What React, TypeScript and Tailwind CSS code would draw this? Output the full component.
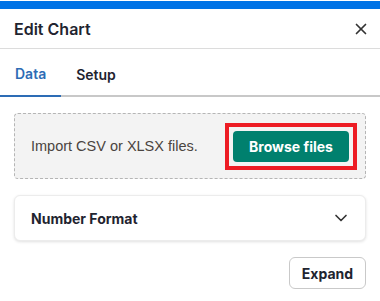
import { ChevronDown, X } from "lucide-react";

export default function App() {
    return (
        <div className="w-[380px] h-[301px] bg-white overflow-hidden font-['Inter',sans-serif] text-[#1f2430]">
            <div className="pt-px">
                <div className="h-2 bg-[#0073e6]" />
            </div>

            <div className="flex h-10 items-center justify-between border-b border-[#dcdcdc] pl-[14px] pr-[10px]">
                <div className="text-[16px] font-semibold">Edit Chart</div>
                <X className="h-[18px] w-[18px] text-[#333]" strokeWidth={2.25} />
            </div>

            <div className="flex h-12 border-b-2 border-[#c8c8c8]">
                <div className="-mb-[2px] flex items-center border-b-2 border-[#2d6cb5] px-[15px] pt-[2px] text-[14px] font-semibold text-[#2d6cb5]">
                    Data
                </div>
                <div className="-mb-[2px] flex items-center px-[15px] pt-[2px] text-[14px] font-semibold">
                    Setup
                </div>
            </div>

            <div className="flex flex-col gap-4 px-[14px] pt-4">
                <div className="flex h-[66px] items-center justify-between rounded border border-dashed border-[#b5b5b5] bg-[#f3f3f3] pl-4 pr-2">
                    <span className="pt-[2px] font-['Liberation_Sans',sans-serif] text-[14.5px] text-[#4a4440]">
                        Import CSV or XLSX files.
                    </span>
                    <div className="border-4 border-[#ed1c24] p-1">
                        <button className="h-[31px] w-[116px] rounded bg-[#00806e] text-[14px] font-bold text-white">
                            Browse files
                        </button>
                    </div>
                </div>

                <div className="flex h-[46px] items-center justify-between rounded-md border border-[#ececec] bg-white pl-4 pr-[14px] shadow-[0_1px_3px_rgba(0,0,0,0.12)]">
                    <span className="text-[14px] font-bold">Number Format</span>
                    <ChevronDown className="h-5 w-5 text-[#333]" strokeWidth={2} />
                </div>

                <div className="flex justify-end">
                    <button className="h-[32px] w-[77px] rounded-md border border-[#c9c9c9] bg-white text-[14px] font-bold">
                        Expand
                    </button>
                </div>
            </div>
        </div>
    );
}
